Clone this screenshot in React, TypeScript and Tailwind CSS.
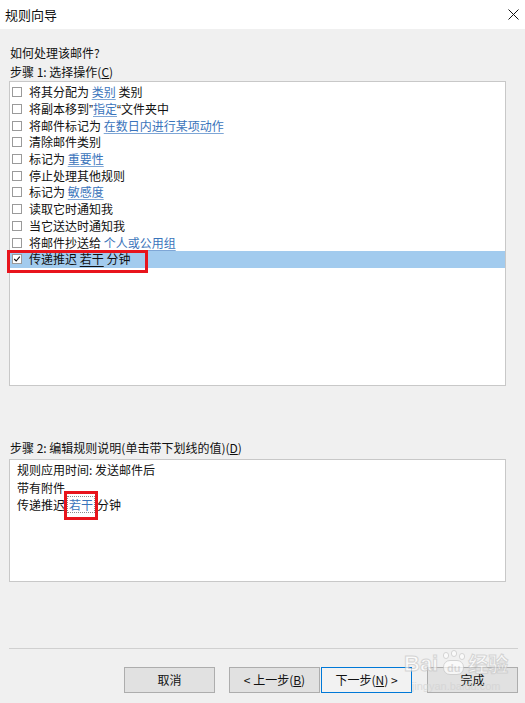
import React from "react";

const font = { fontFamily: '"Noto Sans CJK SC", "Noto Sans", sans-serif' };
const latin = { fontFamily: '"Liberation Sans", sans-serif' };

function L({ children }: { children: React.ReactNode }) {
  return <span className="text-[#3a74bb] underline decoration-[#7ea6d6] underline-offset-2">{children}</span>;
}

type Item = { content: React.ReactNode; checked?: boolean };

const items: Item[] = [
  { content: <>将其分配为 <L>类别</L> 类别</> },
  { content: <>将副本移到<span style={latin}>”</span><L>指定</L><span style={latin}>“</span>文件夹中</> },
  { content: <>将邮件标记为 <L>在数日内进行某项动作</L></> },
  { content: <>清除邮件类别</> },
  { content: <>标记为 <L>重要性</L></> },
  { content: <>停止处理其他规则</> },
  { content: <>标记为 <L>敏感度</L></> },
  { content: <>读取它时通知我</> },
  { content: <>当它送达时通知我</> },
  { content: <>将邮件抄送给 <L>个人或公用组</L></> },
  { content: <>传递推迟 <span className="underline underline-offset-2">若干</span> 分钟</>, checked: true },
];

function Check({ checked }: { checked?: boolean }) {
  return (
    <div className="w-[10px] h-[10px] border border-[#9a9a9a] bg-white flex items-center justify-center shrink-0">
      {checked && (
        <svg width="10" height="10" viewBox="0 0 10 10">
          <path d="M1.5 5 L4 7.5 L8.5 2" stroke="#111" strokeWidth="1.4" fill="none" />
        </svg>
      )}
    </div>
  );
}

function Btn({ children, def }: { children: React.ReactNode; def?: boolean }) {
  return (
    <div
      className={
        "w-[91px] h-[26px] flex items-center justify-center text-[12px] text-[#111] border " +
        (def ? "border-[#0078d7] bg-[#f2f2f2]" : "border-[#adadad] bg-[#e1e1e1]")
      }
    >
      {children}
    </div>
  );
}

export default function App() {
  return (
    <div className="relative w-[525px] h-[703px] bg-[#f0f0f0] overflow-hidden text-[#111]" style={font}>
      <div className="h-[29px] bg-white flex items-center justify-between pl-[5px] pr-[6px]">
        <span className="text-[13px] leading-[17px] pb-[1px]">规则向导</span>
        <svg width="11" height="11" viewBox="0 0 11 11">
          <path d="M0.5 0.5 L10.5 10.5 M10.5 0.5 L0.5 10.5" stroke="#111" strokeWidth="1" />
        </svg>
      </div>

      <div className="pl-[9px] pr-[19px]">
        <div className="mt-[15px] pl-[1px] text-[12px] leading-[17px]">如何处理该邮件?</div>
        <div className="mt-[2px] pl-[1px] text-[12px] leading-[17px]">
          步骤 1: 选择操作(<span className="underline">C</span>)
        </div>
        <div className="mt-[1px] h-[305px] bg-white border border-[#c8c8c8] pt-[2px]">
          {items.map((it, i) => (
            <div
              key={i}
              className={
                "h-[16.7px] flex items-center gap-[7px] pl-[2px] text-[12px] leading-[16px] " +
                (it.checked ? "bg-[#a2cbee]" : "")
              }
            >
              <Check checked={it.checked} />
              <span className="whitespace-nowrap">{it.content}</span>
            </div>
          ))}
        </div>

        <div className="mt-[53px] pl-[1px] text-[12px] leading-[17px]">
          步骤 2: 编辑规则说明(单击带下划线的值)(<span className="underline">D</span>)
        </div>
        <div className="mt-[3px] h-[123px] bg-white border border-[#c8c8c8] pt-[1px] pl-[7px] text-[12px] leading-[17.5px]">
          <div>规则应用时间: 发送邮件后</div>
          <div>带有附件</div>
          <div className="flex items-center">
            <span>传递推迟</span>
            <span className="ml-[2px] px-[1px] border border-dotted border-[#8a8a8a] text-[#3a74bb] leading-[15px]">若干</span>
            <span className="ml-[2px]">分钟</span>
          </div>
        </div>
      </div>

      <div className="ml-[9px] mr-[7px] mt-[66px] h-[1px] bg-[#d0d0d0]" />

      <div className="mt-[18px] pr-[7px] flex justify-end">
        <Btn>取消</Btn>
        <div className="w-[14px]" />
        <Btn>
          &lt; 上一步(<span className="underline">B</span>)
        </Btn>
        <div className="w-[1px]" />
        <Btn def>
          下一步(<span className="underline">N</span>) &gt;
        </Btn>
        <div className="w-[15px]" />
        <Btn>完成</Btn>
      </div>

      {/* annotation overlays */}
      <div className="absolute left-[7px] top-[250px] w-[141px] h-[23px] border-[3px] border-[#e8141c]" />
      <div className="absolute left-[64px] top-[491px] w-[34px] h-[29px] border-[3px] border-[#e8141c]" />

      {/* watermark */}
      <div className="absolute left-[404px] top-[652px] flex flex-col items-center opacity-70 pointer-events-none select-none">
        <div className="flex items-center gap-[2px] leading-[22px]">
          <span className="text-[22px] font-bold text-white" style={{ ...latin, WebkitTextStroke: "1px #c9c9c9" }}>Bai</span>
          <div className="relative w-[26px] h-[24px]">
            <div className="absolute left-[3px] top-[0px] w-[6px] h-[7px] rounded-full bg-white border border-[#c9c9c9]" />
            <div className="absolute left-[11px] top-[-2px] w-[6px] h-[7px] rounded-full bg-white border border-[#c9c9c9]" />
            <div className="absolute left-[19px] top-[1px] w-[6px] h-[7px] rounded-full bg-white border border-[#c9c9c9]" />
            <div className="absolute left-[3px] top-[8px] w-[21px] h-[15px] rounded-[7px] bg-white border border-[#c9c9c9] flex items-center justify-center text-[11px] font-bold text-[#d5d5d5]" style={latin}>du</div>
          </div>
          <span className="text-[20px] font-bold text-white" style={{ WebkitTextStroke: "1px #c9c9c9" }}>经验</span>
        </div>
        <div className="text-[11px] text-[#d2d2d2] leading-[12px] mt-[4px]" style={latin}>jingyan.baidu.com</div>
      </div>
    </div>
  );
}
